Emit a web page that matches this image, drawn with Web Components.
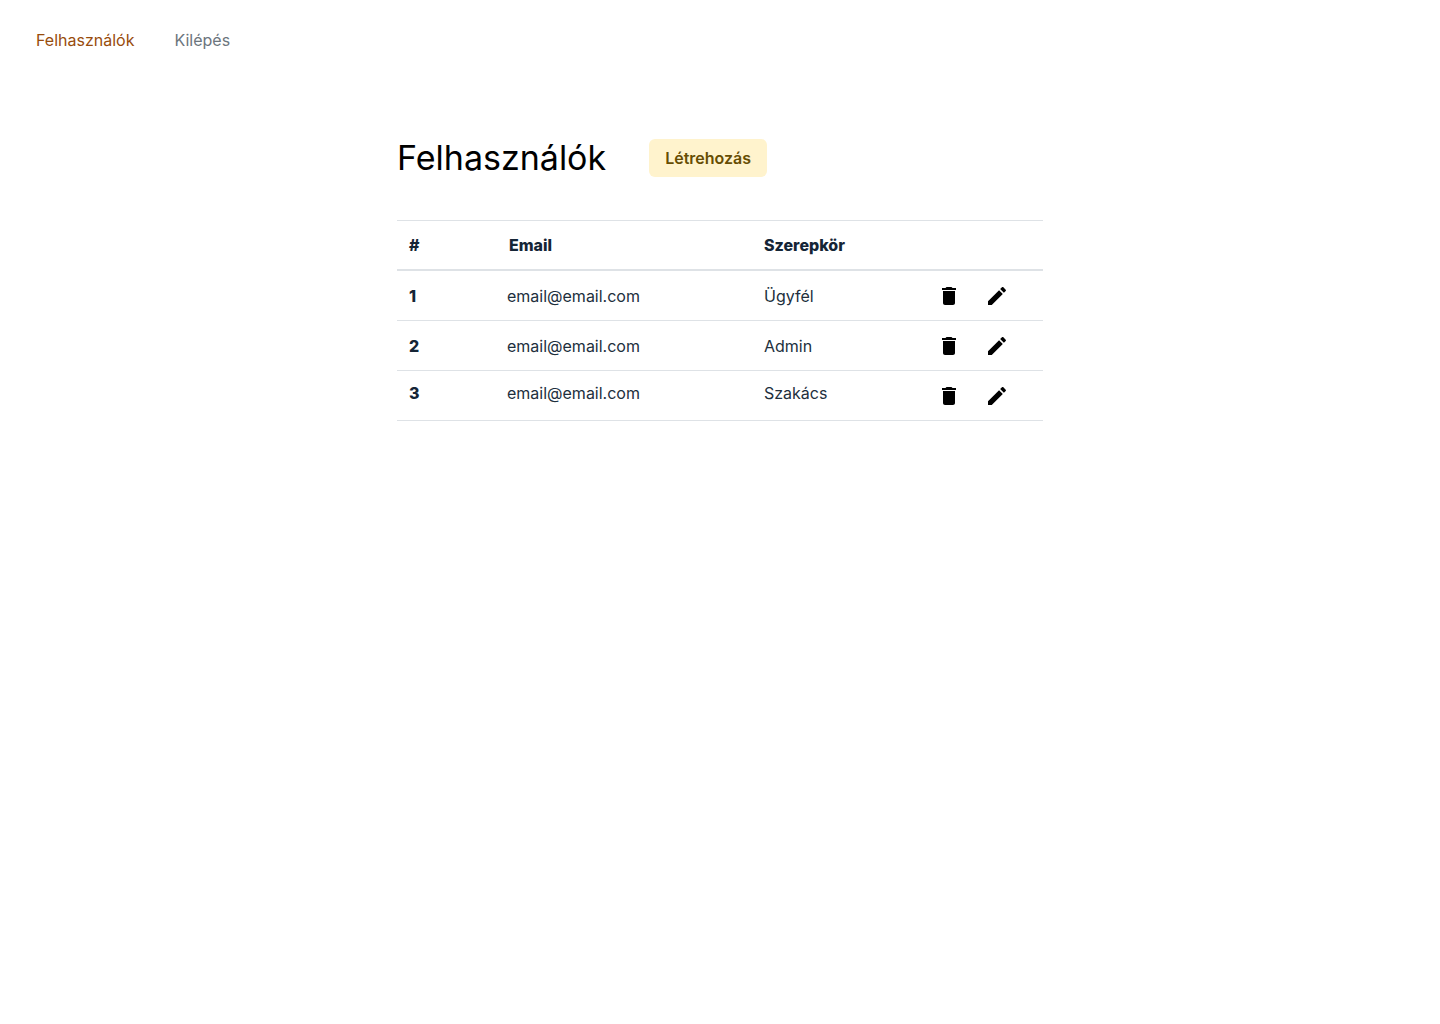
<!DOCTYPE html>
<html lang="hu">
<head>
<meta charset="utf-8">
<meta name="viewport" content="width=device-width, initial-scale=1">
<title>Felhasználók</title>
<style>
body { margin: 0; background: #fff; font: 400 16px/24px Inter, "Liberation Sans", sans-serif; }
</style>
</head>
<body>
<users-page></users-page>
<script>
const define = (name, html, setup) => {
  const template = document.createElement('template');
  template.innerHTML = html;
  customElements.define(name, class extends HTMLElement {
    connectedCallback() {
      if (this.shadowRoot) return;
      this.attachShadow({ mode: 'open' }).append(template.content.cloneNode(true));
      if (setup) setup(this, this.shadowRoot);
    }
  });
};

define('action-icon', `
<style>
:host { display: block; }
button { display: block; padding: 0; border: 0; background: none; color: #000; cursor: pointer; }
svg { display: block; width: 24px; height: 24px; fill: currentColor; }
</style>
<button type="button"><svg viewBox="0 0 24 24" aria-hidden="true"><path/></svg></button>`, (host, root) => {
  const icons = {
    delete: ['Törlés', 'M6 19c0 1.1.9 2 2 2h8c1.1 0 2-.9 2-2V7H6v12zM19 4h-3.5l-1-1h-5l-1 1H5v2h14V4z'],
    edit: ['Szerkesztés', 'M3 17.25V21h3.75L17.81 9.94l-3.75-3.75L3 17.25zM20.71 7.04c.39-.39.39-1.02 0-1.41l-2.34-2.34c-.39-.39-1.02-.39-1.41 0l-1.83 1.83 3.75 3.75 1.83-1.83z']
  };
  const [label, d] = icons[host.getAttribute('name')];
  root.querySelector('button').setAttribute('aria-label', label);
  root.querySelector('path').setAttribute('d', d);
});

define('nav-bar', `
<style>
:host { display: block; }
nav { display: flex; gap: 40px; padding: 28px 36px; }
a { color: #6c757d; text-decoration: none; }
a[aria-current] { color: #984c0c; }
</style>
<nav><a href="#users" aria-current="page">Felhasználók</a><a href="#logout">Kilépés</a></nav>`);

define('page-heading', `
<style>
:host { display: flex; align-items: center; gap: 43px; }
h1 { margin: 0; font-size: 34px; line-height: 44px; font-weight: 400; color: #000; }
</style>
<h1><slot></slot></h1><slot name="action"></slot>`);

define('primary-button', `
<style>
:host { display: block; }
button { display: block; padding: 7px 16px; border: 0; border-radius: 6px; background: #fff3cd; color: #664d03; font: inherit; font-weight: 600; cursor: pointer; }
</style>
<button type="button"><slot></slot></button>`);

define('user-table', `
<style>
:host { display: block; color: #212f3d; }
table { width: 100%; table-layout: fixed; border-collapse: separate; border-spacing: 0; border-top: 1px solid #dee2e6; }
th, td { height: 49px; box-sizing: content-box; padding: 0 12px; border-bottom: 1px solid #dee2e6; text-align: left; vertical-align: middle; font-weight: 400; }
th { font-weight: 800; color: #152536; }
thead th, thead td { height: 48px; border-bottom-width: 2px; }
tbody tr:last-child > :not(.actions) { height: 39px; padding-top: 10px; vertical-align: top; }
.id { width: 76px; }
.email { width: 231px; }
.role { width: 149px; }
td.email { padding-left: 10px; padding-right: 14px; }
.icons { display: flex; gap: 24px; }
</style>
<table>
<thead><tr><th class="id" scope="col">#</th><th class="email" scope="col">Email</th><th class="role" scope="col">Szerepkör</th><td class="actions"></td></tr></thead>
<tbody></tbody>
</table>`, (host, root) => {
  const users = [
    { email: 'email@email.com', role: 'Ügyfél' },
    { email: 'email@email.com', role: 'Admin' },
    { email: 'email@email.com', role: 'Szakács' }
  ];
  root.querySelector('tbody').innerHTML = users.map((user, i) => `
    <tr><th class="id" scope="row">${i + 1}</th><td class="email">${user.email}</td><td class="role">${user.role}</td>
    <td class="actions"><div class="icons"><action-icon name="delete"></action-icon><action-icon name="edit"></action-icon></div></td></tr>`).join('');
});

define('users-page', `
<style>
:host { display: block; }
main { max-width: 646px; margin: 0 auto; padding: 56px 24px; }
user-table { margin-top: 40px; }
</style>
<nav-bar></nav-bar>
<main>
<page-heading>Felhasználók<primary-button slot="action">Létrehozás</primary-button></page-heading>
<user-table></user-table>
</main>`);
</script>
</body>
</html>
